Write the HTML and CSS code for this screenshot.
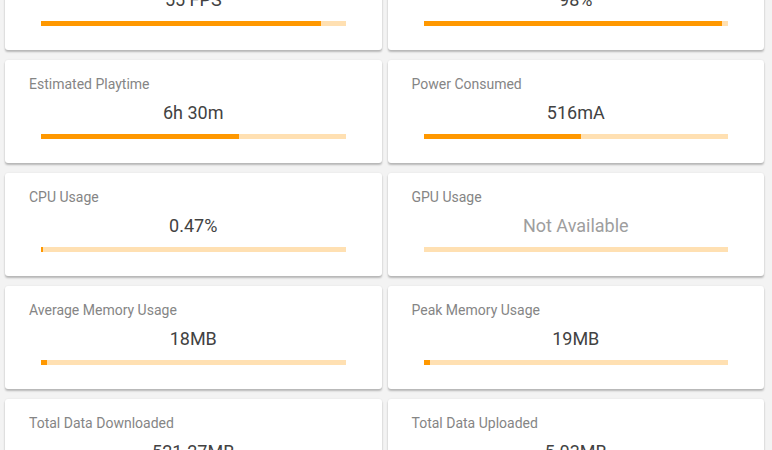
FILE: index.html
```html
<!DOCTYPE html>
<html>
<head>
<meta charset="utf-8">
<link rel="stylesheet" href="styles.css">
</head>
<body>
<div class="grid">
  <div class="card">
    <div class="title">Average FPS</div>
    <div class="value">55 FPS</div>
    <div class="bar"><div class="fill" style="width:92%"></div></div>
  </div>
  <div class="card">
    <div class="title">Battery Level</div>
    <div class="value">98%</div>
    <div class="bar"><div class="fill" style="width:98%"></div></div>
  </div>
  <div class="card">
    <div class="title">Estimated Playtime</div>
    <div class="value">6h 30m</div>
    <div class="bar"><div class="fill" style="width:65%"></div></div>
  </div>
  <div class="card">
    <div class="title">Power Consumed</div>
    <div class="value">516mA</div>
    <div class="bar"><div class="fill" style="width:51.6%"></div></div>
  </div>
  <div class="card">
    <div class="title">CPU Usage</div>
    <div class="value">0.47%</div>
    <div class="bar"><div class="fill" style="width:0.6%"></div></div>
  </div>
  <div class="card">
    <div class="title">GPU Usage</div>
    <div class="value na">Not Available</div>
    <div class="bar"><div class="fill" style="width:0%"></div></div>
  </div>
  <div class="card">
    <div class="title">Average Memory Usage</div>
    <div class="value">18MB</div>
    <div class="bar"><div class="fill" style="width:1.9%"></div></div>
  </div>
  <div class="card">
    <div class="title">Peak Memory Usage</div>
    <div class="value">19MB</div>
    <div class="bar"><div class="fill" style="width:2%"></div></div>
  </div>
  <div class="card">
    <div class="title">Total Data Downloaded</div>
    <div class="value">521.27MB</div>
    <div class="bar"><div class="fill" style="width:52%"></div></div>
  </div>
  <div class="card">
    <div class="title">Total Data Uploaded</div>
    <div class="value">5.03MB</div>
    <div class="bar"><div class="fill" style="width:5%"></div></div>
  </div>
</div>
</body>
</html>
```
FILE: styles.css
```css
html, body {
  margin: 0;
  padding: 0;
  background: #f3f3f3;
  font-family: Roboto, "Liberation Sans", sans-serif;
  overflow: hidden;
  height: 450px;
}
.grid {
  display: grid;
  grid-template-columns: 1fr 1fr;
  column-gap: 6px;
  row-gap: 10px;
  padding: 0 8px 0 5px;
  margin-top: -53px;
}
.card {
  background: #fff;
  border-radius: 3px;
  box-shadow: 0 2px 2px rgba(0,0,0,0.24), 0 0 2px rgba(0,0,0,0.08);
  padding: 14px 24px 24px;
  height: 103px;
  box-sizing: border-box;
}
.title {
  font-size: 14px;
  line-height: 20px;
  color: #858585;
}
.value {
  margin-top: 7px;
  font-size: 18px;
  line-height: 24px;
  color: #424242;
  text-align: center;
}
.value.na {
  color: #9e9e9e;
}
.bar {
  margin: 9px 12px 0;
  height: 5px;
  background: #ffe0b2;
}
.fill {
  height: 100%;
  background: #ff9800;
}
```
